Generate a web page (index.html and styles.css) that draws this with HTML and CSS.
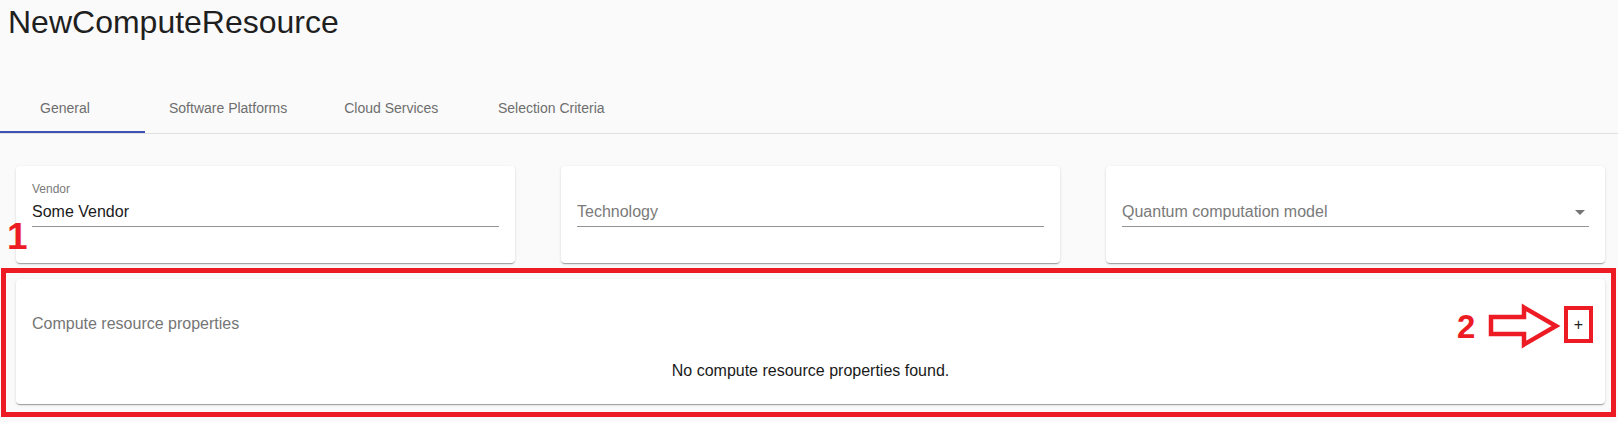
FILE: index.html
```html
<!DOCTYPE html>
<html lang="en">
<head>
<meta charset="utf-8">
<title>NewComputeResource</title>
<link rel="stylesheet" href="styles.css">
</head>
<body>
  <h1 class="page-title">NewComputeResource</h1>

  <nav class="tabs">
    <div class="tab-list">
      <div class="tab tab-active">General</div>
      <div class="tab">Software Platforms</div>
      <div class="tab">Cloud Services</div>
      <div class="tab">Selection Criteria</div>
    </div>
  </nav>

  <main class="content">
    <section class="fields">
      <div class="card field-card">
        <div class="field-label">Vendor</div>
        <div class="field-input">Some Vendor</div>
      </div>
      <div class="card field-card">
        <div class="field-label"></div>
        <div class="field-input field-placeholder">Technology</div>
      </div>
      <div class="card field-card">
        <div class="field-label"></div>
        <div class="field-input field-placeholder field-select">
          <span>Quantum computation model</span>
          <span class="select-arrow"></span>
        </div>
      </div>
    </section>

    <section class="card props-card">
      <div class="props-header">
        <span class="props-title">Compute resource properties</span>
        <button class="add-btn" type="button">+</button>
      </div>
      <div class="props-empty">No compute resource properties found.</div>
    </section>
  </main>

  <div class="anno anno-1">1</div>
  <div class="anno anno-2">2</div>
  <svg class="anno-svg" width="1618" height="422" viewBox="0 0 1618 422" aria-hidden="true">
    <rect x="3.5" y="270.5" width="1610" height="144" fill="none" stroke="#ed1c24" stroke-width="5"/>
    <rect x="1566" y="308" width="25" height="33" fill="none" stroke="#ed1c24" stroke-width="4"/>
    <polygon points="1491,317 1524,317 1524,307.5 1556,326 1524,344.5 1524,334 1491,334" fill="none" stroke="#ed1c24" stroke-width="4.5" stroke-linejoin="miter"/>
  </svg>
</body>
</html>
```

FILE: styles.css
```css
* {
  box-sizing: border-box;
}

html, body {
  margin: 0;
  padding: 0;
}

body {
  position: relative;
  width: 1618px;
  height: 422px;
  overflow: hidden;
  background: #fafafa;
  font-family: "Liberation Sans", Arial, sans-serif;
  color: #212121;
}

.page-title {
  margin: 2px 0 0 8px;
  font-size: 32px;
  line-height: 40px;
  font-weight: normal;
  color: #1f1f1f;
}

.tabs {
  margin-top: 43px;
  border-bottom: 1px solid #e0e0e0;
  overflow: hidden;
}

.tab-list {
  display: flex;
  margin-left: -15px;
}

.tab {
  height: 48px;
  min-width: 160px;
  padding: 0 24px;
  display: flex;
  align-items: center;
  justify-content: center;
  font-size: 14px;
  color: #6e6e6e;
  border-bottom: 2px solid transparent;
  white-space: nowrap;
}

.tab-active {
  border-bottom-color: #3f51b5;
}

.content {
  padding: 32px 13px 0 16px;
}

.fields {
  display: grid;
  grid-template-columns: repeat(3, 1fr);
  gap: 46px;
}

.card {
  background: #fff;
  border-radius: 4px;
  box-shadow: 0 2px 1px -1px rgba(0, 0, 0, 0.2), 0 1px 1px 0 rgba(0, 0, 0, 0.14), 0 1px 3px 0 rgba(0, 0, 0, 0.12);
}

.field-card {
  padding: 16px 16px 36px;
}

.field-label {
  height: 14px;
  font-size: 12px;
  line-height: 14px;
  color: #7a7a7a;
}

.field-input {
  margin-top: 6px;
  font-size: 16px;
  line-height: 20px;
  padding-bottom: 4px;
  border-bottom: 1px solid #949494;
  color: #1a1a1a;
}

.field-placeholder {
  color: #7a7a7a;
}

.field-select {
  display: flex;
  align-items: center;
  justify-content: space-between;
}

.select-arrow {
  width: 0;
  height: 0;
  margin: 0 4px;
  border-left: 5px solid transparent;
  border-right: 5px solid transparent;
  border-top: 5px solid #757575;
}

.props-card {
  margin-top: 16px;
  padding: 24px 16px 23px;
}

.props-header {
  height: 42px;
  display: flex;
  align-items: center;
  justify-content: space-between;
}

.props-title {
  font-size: 16px;
  line-height: 20px;
  color: #757575;
}

.add-btn {
  background: none;
  border: none;
  padding: 0 6px;
  margin: 2px 0 0;
  font-family: "Liberation Sans", Arial, sans-serif;
  font-size: 16px;
  line-height: 20px;
  color: #212121;
}

.props-empty {
  margin-top: 16px;
  text-align: center;
  font-size: 16px;
  line-height: 20px;
  color: #1a1a1a;
}

.anno {
  position: absolute;
  font-family: "Liberation Sans", Arial, sans-serif;
  font-weight: bold;
  color: #ed1c24;
}

.anno-1 {
  left: 7px;
  top: 218px;
  font-size: 37px;
  line-height: 37px;
}

.anno-2 {
  left: 1457px;
  top: 310px;
  font-size: 33px;
  line-height: 33px;
}

.anno-svg {
  position: absolute;
  left: 0;
  top: 0;
  pointer-events: none;
}
```
